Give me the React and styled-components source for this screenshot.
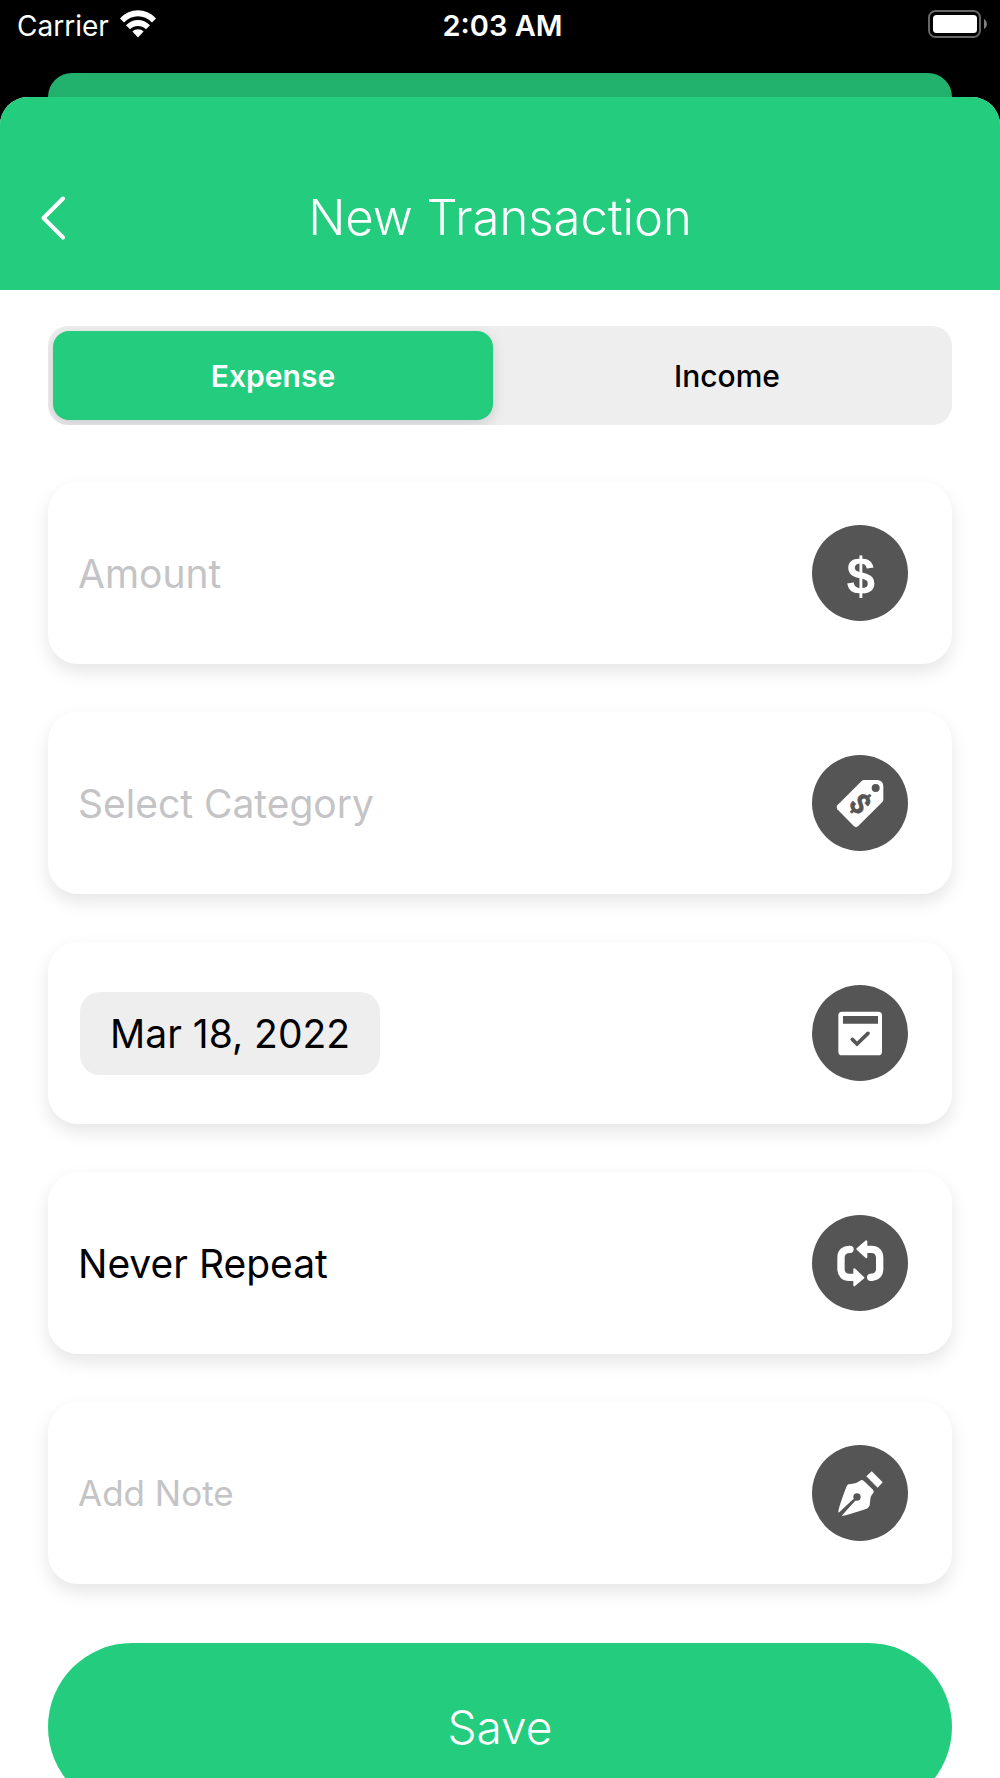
import { useState } from 'react';
import styled, { createGlobalStyle } from 'styled-components';

const TYPES = ['Expense', 'Income'];
const CATEGORIES = ['Food', 'Transport', 'Shopping', 'Bills'];
const REPEATS = ['Never Repeat', 'Daily', 'Weekly', 'Monthly'];

export default function App() {
    const [type, setType] = useState('Expense');
    const [category, setCategory] = useState('');

    return (
        <Screen>
            <GlobalStyle />
            <StatusBar>
                <div className="left">
                    <span>Carrier</span>
                    <WifiIcon />
                </div>
                <time>2:03 AM</time>
                <div className="right">
                    <BatteryIcon />
                </div>
            </StatusBar>
            <BackSheet />
            <Sheet>
                <Header>
                    <BackButton type="button" aria-label="Back">
                        <svg width="24" height="44" viewBox="0 0 24 44">
                            <path d="M22 2.5 2.5 22 22 41.5" />
                        </svg>
                    </BackButton>
                    <h1>New Transaction</h1>
                </Header>

                <Form onSubmit={(e) => e.preventDefault()}>
                    <Segment role="radiogroup" aria-label="Transaction type">
                        {TYPES.map((item) =>
                            <SegmentItem key={item} $active={item === type}>
                                <input
                                    type="radio"
                                    name="type"
                                    value={item}
                                    checked={item === type}
                                    onChange={() => setType(item)}
                                />
                                {item}
                            </SegmentItem>
                        )}
                    </Segment>

                    <CardList>
                        <Card>
                            <TextInput id="amount" placeholder="Amount" inputMode="decimal" />
                            <IconLabel htmlFor="amount" aria-label="Amount">
                                <DollarIcon />
                            </IconLabel>
                        </Card>
                        <Card>
                            <SelectInput
                                id="category"
                                value={category}
                                $empty={!category}
                                onChange={(e) => setCategory(e.target.value)}
                            >
                                <option value="">Select Category</option>
                                {CATEGORIES.map((item) => <option key={item}>{item}</option>)}
                            </SelectInput>
                            <IconLabel htmlFor="category" aria-label="Category">
                                <TagIcon />
                            </IconLabel>
                        </Card>
                        <Card>
                            <DateButton id="date" type="button">Mar 18, 2022</DateButton>
                            <IconLabel htmlFor="date">
                                <CalendarIcon />
                            </IconLabel>
                        </Card>
                        <Card>
                            <SelectInput id="repeat">
                                {REPEATS.map((item) => <option key={item}>{item}</option>)}
                            </SelectInput>
                            <IconLabel htmlFor="repeat" aria-label="Repeat">
                                <LoopIcon />
                            </IconLabel>
                        </Card>
                        <Card>
                            <TextInput id="note" placeholder="Add Note" $small />
                            <IconLabel htmlFor="note" aria-label="Note">
                                <PenIcon />
                            </IconLabel>
                        </Card>
                    </CardList>

                    <SaveButton type="submit">Save</SaveButton>
                </Form>
            </Sheet>
        </Screen>
    )
}

function WifiIcon() {
    return (
        <svg width="38" height="28" viewBox="0 0 38 28" fill="#fff" aria-hidden="true">
            <path d="M1 8.4C11-2.4 27-2.4 37 8.4L33 12.6C25 4.2 13 4.2 5 12.6Z" />
            <path d="M7 15.2C14 8.2 24 8.2 31 15.2L27 19.2C22.4 14.8 15.6 14.8 11 19.2Z" />
            <path d="M13.4 21.6C16.6 18.4 21.4 18.4 24.6 21.6L19 27.4Z" />
        </svg>
    )
}

function BatteryIcon() {
    return (
        <svg width="60" height="28" viewBox="0 0 60 28" aria-hidden="true">
            <rect x="1" y="1" width="51" height="26" rx="6.5" fill="none" stroke="#666" strokeWidth="2" />
            <rect x="5" y="5" width="44" height="18" rx="3.5" fill="#fff" />
            <path d="M56 9C59.8 11 59.8 17 56 19Z" fill="#808080" />
        </svg>
    )
}

function DollarIcon() {
    return (
        <svg viewBox="0 0 288 288" aria-hidden="true">
            <text x="146" y="206" textAnchor="middle" fontFamily="Liberation Sans, sans-serif" fontWeight="700" fontSize="154" fill="#fff">$</text>
        </svg>
    )
}

function TagIcon() {
    return (
        <svg viewBox="0 0 288 288" aria-hidden="true">
            <path
                d="M157 75H197Q214 77 214 95V134Q214 138 211 141L138 214Q132 219 126 214L76 163Q71 157 76 151L149 78Q152 75 157 75Z"
                fill="#fff"
            />
            <circle cx="191" cy="99" r="12" fill="#555" />
            <text
                transform="translate(144 146) rotate(47)"
                y="29"
                textAnchor="middle"
                fontFamily="Roboto, sans-serif"
                fontWeight="700"
                fontSize="84"
                fill="#555"
                stroke="#555"
                strokeWidth="2"
            >$</text>
        </svg>
    )
}

function CalendarIcon() {
    return (
        <svg viewBox="0 0 288 288" aria-hidden="true">
            <rect x="79" y="80" width="131" height="131" rx="11" fill="#fff" />
            <path d="M93 93H198V116H93Z" fill="#555" />
            <path d="M121 163 135 177 168 145" fill="none" stroke="#555" strokeWidth="11" strokeLinecap="round" />
        </svg>
    )
}

function LoopIcon() {
    const half = 'M114 103C96 103 87 112 87 128V162C87 178 96 187 112 187H128';
    const head = 'M127 163 154 188 127 211Z';
    return (
        <svg viewBox="0 0 288 288" aria-hidden="true">
            {[0, 180].map((angle) =>
                <g key={angle} transform={`rotate(${angle} 145 145)`}>
                    <path d={half} fill="none" stroke="#fff" strokeWidth="22" />
                    <circle cx="114" cy="103" r="11" fill="#fff" />
                    <path d={head} fill="#fff" stroke="#fff" strokeWidth="6" strokeLinejoin="round" />
                </g>
            )}
        </svg>
    )
}

function PenIcon() {
    return (
        <svg viewBox="0 0 288 288" aria-hidden="true">
            <path
                d="M79 200Q80 186 103 126Q106 117 114 117Q131 118 143 108Q149 103 155 107L183 134Q187 139 184 144Q174 155 175 165L173 181Q172 189 164 191Q110 209 89 213L127 169L122 164L80 203Z"
                fill="#fff"
            />
            <path d="M84 208 135 157" stroke="#555" strokeWidth="7" />
            <circle cx="135" cy="156" r="11" fill="#555" />
            <path d="M163 94 179 79 212 112 197 128Z" fill="#fff" />
        </svg>
    )
}

const GlobalStyle = createGlobalStyle`
  * {
    box-sizing:border-box;
  }

  body {
    margin:0;
    background:#000;
    font-family:Inter, 'Liberation Sans', sans-serif;
  }

  button, input, select {
    border:0;
    padding:0;
    background:none;
    font-family:inherit;
  }
`

const Screen = styled.div`
  height:100vh;
  display:flex;
  flex-direction:column;
  overflow:hidden;
`

const StatusBar = styled.div`
  flex:none;
  height:73px;
  padding:8px 12px 0 17px;
  display:grid;
  grid-template-columns:1fr auto 1fr;
  align-items:start;
  color:#fff;
  font-size:28px;
  line-height:36px;

  time {
    font-size:29px;
    font-weight:600;
  }

  .left {
    display:flex;
    gap:10px;
  }

  .left svg, .right svg {
    margin-top:2px;
  }

  .right {
    display:flex;
    justify-content:flex-end;
  }
`

const BackSheet = styled.div`
  flex:none;
  height:24px;
  margin:0 48px;
  border-radius:24px 24px 0 0;
  background:#23b26d;
`

const Sheet = styled.main`
  flex:1;
  min-height:0;
  display:flex;
  flex-direction:column;
  border-radius:28px 28px 0 0;
  background:#fff;
  overflow:hidden;
`

const Header = styled.header`
  flex:none;
  height:193px;
  padding:48px 41px 0;
  display:grid;
  grid-template-columns:48px 1fr 48px;
  align-items:center;
  background:#24cc7e;
  color:#fff;

  h1 {
    margin:0;
    font-size:49px;
    font-weight:300;
    line-height:64px;
    text-align:center;
  }
`

const BackButton = styled.button`
  display:flex;
  cursor:pointer;

  svg {
    fill:none;
    stroke:#fff;
    stroke-width:4;
    stroke-linecap:round;
    stroke-linejoin:round;
  }
`

const Form = styled.form`
  flex:1;
  min-height:0;
  padding:36px 48px;
  overflow-y:auto;
  scrollbar-width:none;
`

const Segment = styled.div`
  display:grid;
  grid-template-columns:1fr 1fr;
  gap:14px;
  padding:5px;
  border-radius:20px;
  background:#eee;
  overflow:hidden;
`

const SegmentItem = styled.label`
  height:89px;
  display:flex;
  align-items:center;
  justify-content:center;
  border-radius:16px;
  background:${({ $active }) => $active ? '#24cc7e' : 'transparent'};
  box-shadow:${({ $active }) => $active ? '0 4px 14px rgba(0, 0, 0, 0.14)' : 'none'};
  color:${({ $active }) => $active ? '#fff' : '#000'};
  font-size:30px;
  font-weight:${({ $active }) => $active ? 600 : 500};
  cursor:pointer;

  input {
    appearance:none;
    margin:0;
  }
`

const CardList = styled.div`
  margin-top:57px;
  display:flex;
  flex-direction:column;
  gap:48px;
`

const Card = styled.div`
  height:182px;
  padding:0 44px 0 30px;
  display:flex;
  align-items:center;
  justify-content:space-between;
  border-radius:30px;
  background:#fff;
  box-shadow:0 8px 18px rgba(0, 0, 0, 0.1);
`

const TextInput = styled.input`
  flex:1;
  min-width:0;
  height:64px;
  font-size:${({ $small }) => $small ? 35 : 39}px;
  outline:0;

  &::placeholder {
    color:#c4c4c6;
    opacity:1;
  }
`

const SelectInput = styled.select`
  flex:1;
  min-width:0;
  height:64px;
  appearance:none;
  color:${({ $empty }) => $empty ? '#c4c4c6' : '#000'};
  font-size:39px;
  outline:0;
`

const DateButton = styled.button`
  height:83px;
  margin-left:2px;
  padding:0 30px;
  border-radius:20px;
  background:#eee;
  color:#000;
  font-size:39px;
  cursor:pointer;
`

const IconLabel = styled.label`
  flex:none;
  width:96px;
  height:96px;
  border-radius:50%;
  background:#555;

  svg {
    display:block;
    width:100%;
    height:100%;
  }
`

const SaveButton = styled.button`
  display:block;
  width:100%;
  height:168px;
  margin-top:59px;
  border-radius:84px;
  background:#24cc7e;
  color:#fff;
  font-size:46px;
  font-weight:300;
  cursor:pointer;
`
